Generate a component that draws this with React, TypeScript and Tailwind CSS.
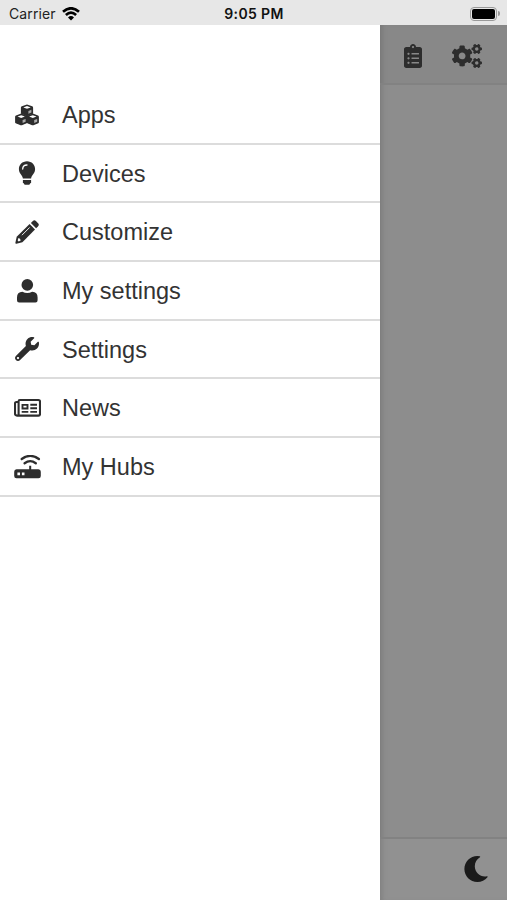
import type { ReactNode } from "react";
import { FaClipboardList, FaCogs, FaMoon, FaWrench } from "react-icons/fa";

function Cube({ x, y }: { x: number; y: number }) {
  return (
    <g transform={`translate(${x} ${y})`}>
      <path
        d="M6 0L11.2 1.9Q12.1 2.3 12.1 3.3V8.6Q12.1 9.4 11.4 9.7L6.7 11.6Q6 11.8 5.3 11.6L0.6 9.7Q-0.1 9.4 -0.1 8.6V3.3Q-0.1 2.3 0.8 1.9Z"
        fill="currentColor"
      />
      <path d="M6 1.7L9.7 3L6 4.4L2.3 3Z" fill="white" />
      <path d="M7.4 6.5L10.4 5.3V8.1L7.4 9.4Z" fill="#aaa" />
    </g>
  );
}

function CubesIcon() {
  return (
    <svg viewBox="0 0 24 24" className="w-6 h-6">
      <Cube x={6} y={1.4} />
      <Cube x={0.2} y={10.6} />
      <Cube x={11.8} y={10.6} />
    </svg>
  );
}

function BulbIcon() {
  return (
    <svg viewBox="0 0 24 24" className="w-6 h-6" fill="none">
      <path
        d="M12 0.3C16.7 0.3 20.1 3.9 20.1 8.1C20.1 12.7 16.8 13.8 16.1 17.5H7.9C7.2 13.8 3.9 12.7 3.9 8.1C3.9 3.9 7.3 0.3 12 0.3Z"
        fill="currentColor"
      />
      <path d="M7.9 19H16.1V21.3L14.3 23.8H9.7L7.9 21.3Z" fill="currentColor" />
      <path d="M7.7 8.1Q7.7 4 12 4" stroke="white" strokeWidth="1.3" strokeLinecap="round" />
    </svg>
  );
}

function PencilIcon() {
  return (
    <svg viewBox="0 0 24 24" className="w-6 h-6" fill="none">
      <path
        d="M15.9 3L17.9 1Q19.4 -0.4 20.9 1L23.1 3.2Q24.5 4.7 23.1 6.2L21.1 8.2Z"
        fill="currentColor"
      />
      <path d="M14.6 4.1L20 9.5L7.4 22.3L1.4 23.8Q0.2 24 0.4 22.7L1.7 16.8Z" fill="currentColor" />
      <path d="M7.2 14.9L14.4 7.7" stroke="white" strokeWidth="0.9" strokeLinecap="round" />
      <path d="M3.4 18.1L5 18.8L5.7 20.5L3.7 21.4L2.7 20.5Z" fill="white" />
    </svg>
  );
}

function PersonIcon() {
  return (
    <svg viewBox="0 0 24 24" className="w-6 h-6" fill="currentColor">
      <circle cx="12.3" cy="5.9" r="5.8" />
      <path d="M7.4 12.8Q12.3 15.3 17.2 12.8Q22.6 12.9 22.6 18.6V21.2Q22.6 23.4 20.5 23.4H4.1Q2 23.4 2 21.2V18.6Q2 12.9 7.4 12.8Z" />
    </svg>
  );
}

function NewsIcon() {
  return (
    <svg viewBox="0 0 27 24" className="w-[27px] h-6" fill="none" stroke="currentColor" strokeWidth="2.1">
      <path d="M4.6 19V5.2Q4.6 4 5.8 4H24.5Q26 4 26 5.5V18.1Q26 19.6 24.5 19.6H3Q1 19.6 1 17.6V7.4Q1 6 2.4 6H4.6" />
      <path d="M8.5 8.9H13.5V12.5H8.5ZM16.3 8.8H23M16.3 12.3H23M7.7 15.9H14.3M16.3 15.9H23" strokeWidth="1.9" />
    </svg>
  );
}

function RouterIcon() {
  return (
    <svg viewBox="0 0 27 24" className="w-[27px] h-6" fill="none">
      <path
        fillRule="evenodd"
        fill="currentColor"
        d="M2.5 14.2H15.2V10.8H17.2V14.2H24.5Q26.8 14.2 26.8 16.7V21Q26.8 23.3 24.5 23.3H2.5Q0.2 23.3 0.2 21V16.7Q0.2 14.2 2.5 14.2ZM3.4 17.6V20.2H6V17.6ZM7.9 17.6V20.2H10.5V17.6Z"
      />
      <path d="M7.7 4Q16.2 -2.2 24.9 4M10.6 8.2Q16.2 4.1 21.8 8.2" stroke="currentColor" strokeWidth="2.3" strokeLinecap="round" />
    </svg>
  );
}

const menuItems: { label: string; icon: ReactNode }[] = [
  { label: "Apps", icon: <CubesIcon /> },
  { label: "Devices", icon: <BulbIcon /> },
  { label: "Customize", icon: <PencilIcon /> },
  { label: "My settings", icon: <PersonIcon /> },
  { label: "Settings", icon: <FaWrench className="w-6 h-6" /> },
  { label: "News", icon: <NewsIcon /> },
  { label: "My Hubs", icon: <RouterIcon /> },
];

function StatusBar() {
  return (
    <div className="h-[25px] shrink-0 grid grid-cols-3 items-center bg-[#e7e7e7] pl-[9px] pr-[7px] pt-[2px] font-['Inter',sans-serif] text-[14px] leading-none text-[#222]">
      <div className="flex items-center gap-[6px]">
        <span className="tracking-[0.1px]">Carrier</span>
        <svg viewBox="0 0 18 14" className="w-[18px] h-[14px] text-black" fill="none" stroke="currentColor" strokeWidth="2.7">
          <path d="M1 4.8Q9 -2.2 17 4.8M3.9 8Q9 3.4 14.1 8" />
          <path d="M6 10.4Q9 7.8 12 10.4L9 13.4Z" fill="currentColor" stroke="none" />
        </svg>
      </div>
      <span className="pr-px text-center font-semibold text-[#111] tracking-[0.35px] whitespace-nowrap">9:05 PM</span>
      <div className="flex items-center justify-end gap-px">
        <div className="w-[27px] h-[14px] rounded-[4px] border border-[#999] p-px">
          <div className="h-full rounded-[2px] bg-black" />
        </div>
        <div className="w-[2px] h-[5px] rounded-r-full bg-[#999]" />
      </div>
    </div>
  );
}

export default function App() {
  return (
    <div className="w-[507px] h-[900px] flex flex-col overflow-hidden bg-white">
      <StatusBar />
      <div className="flex flex-1 min-h-0">
        {/* Drawer */}
        <nav className="w-[380px] shrink-0 bg-white pt-[61px] font-['Liberation_Sans',sans-serif] text-[#333]">
          {menuItems.map(({ label, icon }) => (
            <div key={label} className="h-[58.67px] flex items-center border-b-2 border-[#dcdcdc]">
              <div className="w-[54px] shrink-0 flex justify-center pt-px text-[#2d2d2d]">{icon}</div>
              <span className="pl-2 pt-[3px] text-[23.5px] leading-none">{label}</span>
            </div>
          ))}
        </nav>

        {/* Dimmed page behind the drawer */}
        <main className="flex-1 flex flex-col bg-[#8d8d8d] shadow-[inset_5px_0_5px_-3px_#7b7b7b]">
          <header className="h-[60px] flex items-center pt-[4px] pl-[23px] border-b-2 border-[#828282] bg-black/3 text-[#2d2d2d]">
            <FaClipboardList className="w-5 h-6" />
            <FaCogs className="ml-[29px] w-[30px] h-6" />
          </header>
          <div className="flex-1" />
          <footer className="h-[63px] flex items-center justify-end pr-[18px] pb-0.5 border-t-2 border-[#828282] bg-white/4 text-[#1a1a1a]">
            <FaMoon className="w-[26px] h-[26px]" />
          </footer>
        </main>
      </div>
    </div>
  );
}
